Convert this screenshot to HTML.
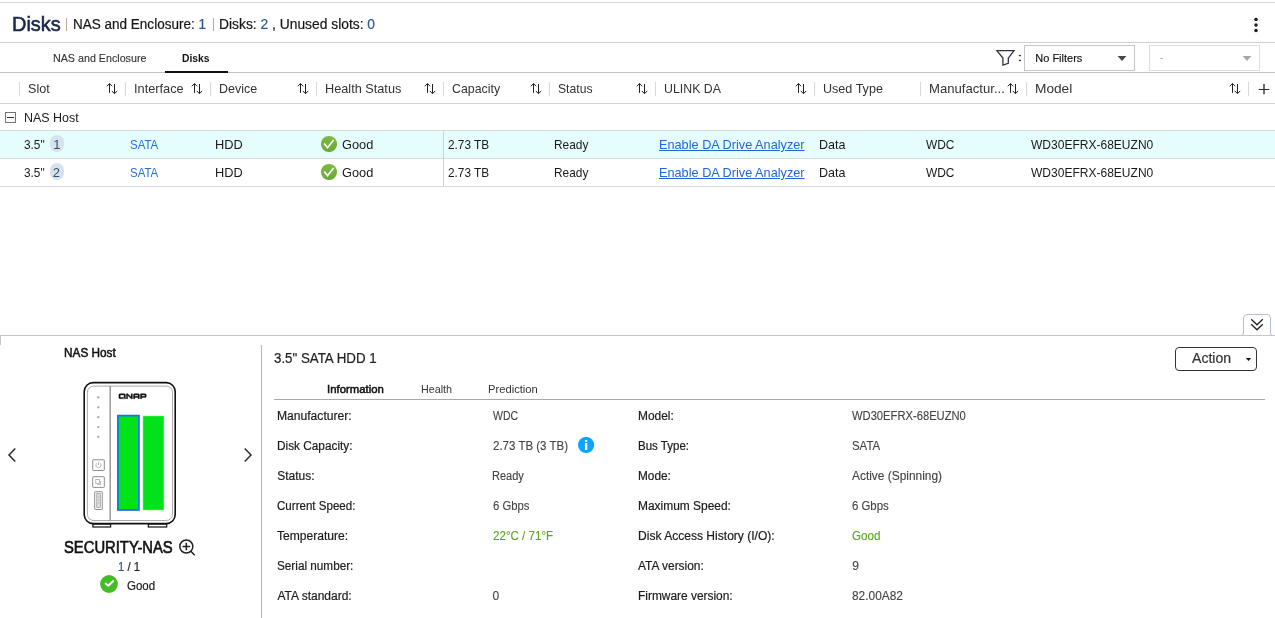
<!DOCTYPE html>
<html>
<head>
<meta charset="utf-8">
<title>Disks</title>
<style>
*{box-sizing:border-box;margin:0;padding:0}html,body{background:#fff}body{font-family:"Liberation Sans",sans-serif;position:relative}.t{position:absolute;white-space:nowrap}.a{position:absolute}html,body{width:1275px;height:618px;overflow:hidden}.t{transform-origin:0 50%}
</style>
</head>
<body>
<!-- horizontal rules -->
<div class="a" style="left:0;top:2px;width:1275px;height:1px;background:#d6d6d6"></div>
<div class="a" style="left:0;top:42px;width:1275px;height:1px;background:#d0d0d0"></div>
<div class="a" style="left:0;top:72px;width:1275px;height:1px;background:#c2c2c2"></div>
<div class="a" style="left:0;top:103px;width:1275px;height:1px;background:#d4d4d4"></div>
<div class="a" style="left:0;top:130px;width:1275px;height:1px;background:#dadada"></div>
<div class="a" style="left:0;top:131px;width:1275px;height:27px;background:#e6fdfd"></div>
<div class="a" style="left:0;top:158px;width:1275px;height:1px;background:#dadada"></div>
<div class="a" style="left:0;top:186px;width:1275px;height:1px;background:#dadada"></div>
<div class="a" style="left:443px;top:131px;width:1px;height:55px;background:#d2d2d2"></div>
<!-- title pipes -->
<div class="a" style="left:66px;top:18px;width:1px;height:13px;background:#b9ad94"></div>
<div class="a" style="left:213px;top:18px;width:1px;height:13px;background:#b9ad94"></div>
<!-- kebab -->
<svg class="a" style="left:1250px;top:14px" width="12" height="22" viewBox="0 0 12 22"><circle cx="6" cy="5.500" r="1.750" fill="#1a1a1a"/><circle cx="6" cy="11" r="1.750" fill="#1a1a1a"/><circle cx="6" cy="16.500" r="1.750" fill="#1a1a1a"/></svg>
<!-- active tab underline -->
<div class="a" style="left:165px;top:71px;width:63px;height:2px;background:#111"></div>
<!-- filter -->
<svg class="a" style="left:994px;top:48px" width="24" height="20" viewBox="0 0 24 20"><path d="M2.900 2.600 H20 L14.300 10.100 V15.300 L8.900 17 V10.100 Z" fill="none" stroke="#30313b" stroke-width="1.300" stroke-linejoin="miter"/></svg>
<svg class="a" style="left:1017px;top:53px" width="6" height="10" viewBox="0 0 6 10"><rect x="1.800" y="1.900" width="2.200" height="1.300" fill="#3c3c3c"/><rect x="1.800" y="6.800" width="2.200" height="1.300" fill="#3c3c3c"/></svg>
<div class="a" style="left:1024px;top:45px;width:111px;height:26px;border:1px solid #c6c6c6;background:#fff"></div>
<svg class="a" style="left:1117px;top:55px" width="10" height="7" viewBox="0 0 10 7"><path d="M0.600 0.900 H9.400 L5 5.900 Z" fill="#474747"/></svg>
<div class="a" style="left:1149px;top:45px;width:111px;height:26px;border:1px solid #dedede;background:#fff"></div>
<svg class="a" style="left:1242px;top:55px" width="10" height="7" viewBox="0 0 10 7"><path d="M0.600 0.900 H9.400 L5 5.900 Z" fill="#a8a8a8"/></svg>
<!-- header separators -->
<div class="a" style="left:19px;top:82px;width:1px;height:14px;background:#d9d9d9"></div>
<div class="a" style="left:125px;top:82px;width:1px;height:14px;background:#d9d9d9"></div>
<div class="a" style="left:210px;top:82px;width:1px;height:14px;background:#d9d9d9"></div>
<div class="a" style="left:316px;top:82px;width:1px;height:14px;background:#d9d9d9"></div>
<div class="a" style="left:443px;top:82px;width:1px;height:14px;background:#d9d9d9"></div>
<div class="a" style="left:549px;top:82px;width:1px;height:14px;background:#d9d9d9"></div>
<div class="a" style="left:655px;top:82px;width:1px;height:14px;background:#d9d9d9"></div>
<div class="a" style="left:814px;top:82px;width:1px;height:14px;background:#d9d9d9"></div>
<div class="a" style="left:920px;top:82px;width:1px;height:14px;background:#d9d9d9"></div>
<div class="a" style="left:1026px;top:82px;width:1px;height:14px;background:#d9d9d9"></div>
<div class="a" style="left:1248px;top:82px;width:1px;height:14px;background:#d9d9d9"></div>
<svg class="a" style="left:106px;top:83px" width="12" height="12" viewBox="0 0 12 12"><path d="M3.500 9.900 V0.600 M0.800 3.300 L3.500 0.500 L6.200 3.300 M8.500 1 V10.600 M5.800 7.900 L8.500 10.700 L11.200 7.900" fill="none" stroke="#222" stroke-width="1"/></svg><svg class="a" style="left:191px;top:83px" width="12" height="12" viewBox="0 0 12 12"><path d="M3.500 9.900 V0.600 M0.800 3.300 L3.500 0.500 L6.200 3.300 M8.500 1 V10.600 M5.800 7.900 L8.500 10.700 L11.200 7.900" fill="none" stroke="#222" stroke-width="1"/></svg><svg class="a" style="left:297px;top:83px" width="12" height="12" viewBox="0 0 12 12"><path d="M3.500 9.900 V0.600 M0.800 3.300 L3.500 0.500 L6.200 3.300 M8.500 1 V10.600 M5.800 7.900 L8.500 10.700 L11.200 7.900" fill="none" stroke="#222" stroke-width="1"/></svg><svg class="a" style="left:424px;top:83px" width="12" height="12" viewBox="0 0 12 12"><path d="M3.500 9.900 V0.600 M0.800 3.300 L3.500 0.500 L6.200 3.300 M8.500 1 V10.600 M5.800 7.900 L8.500 10.700 L11.200 7.900" fill="none" stroke="#222" stroke-width="1"/></svg><svg class="a" style="left:530px;top:83px" width="12" height="12" viewBox="0 0 12 12"><path d="M3.500 9.900 V0.600 M0.800 3.300 L3.500 0.500 L6.200 3.300 M8.500 1 V10.600 M5.800 7.900 L8.500 10.700 L11.200 7.900" fill="none" stroke="#222" stroke-width="1"/></svg><svg class="a" style="left:636px;top:83px" width="12" height="12" viewBox="0 0 12 12"><path d="M3.500 9.900 V0.600 M0.800 3.300 L3.500 0.500 L6.200 3.300 M8.500 1 V10.600 M5.800 7.900 L8.500 10.700 L11.200 7.900" fill="none" stroke="#222" stroke-width="1"/></svg><svg class="a" style="left:795px;top:83px" width="12" height="12" viewBox="0 0 12 12"><path d="M3.500 9.900 V0.600 M0.800 3.300 L3.500 0.500 L6.200 3.300 M8.500 1 V10.600 M5.800 7.900 L8.500 10.700 L11.200 7.900" fill="none" stroke="#222" stroke-width="1"/></svg><svg class="a" style="left:1007px;top:83px" width="12" height="12" viewBox="0 0 12 12"><path d="M3.500 9.900 V0.600 M0.800 3.300 L3.500 0.500 L6.200 3.300 M8.500 1 V10.600 M5.800 7.900 L8.500 10.700 L11.200 7.900" fill="none" stroke="#222" stroke-width="1"/></svg><svg class="a" style="left:1229px;top:83px" width="12" height="12" viewBox="0 0 12 12"><path d="M3.500 9.900 V0.600 M0.800 3.300 L3.500 0.500 L6.200 3.300 M8.500 1 V10.600 M5.800 7.900 L8.500 10.700 L11.200 7.900" fill="none" stroke="#222" stroke-width="1"/></svg>
<svg class="a" style="left:1258px;top:83px" width="12" height="12" viewBox="0 0 12 12"><path d="M6 0.900 V11.200" stroke="#222" stroke-width="1.300" fill="none"/><path d="M0.800 6.500 H11.300" stroke="#2a2a2a" stroke-width="1" fill="none"/></svg>
<!-- group row toggle -->
<div class="a" style="left:5px;top:112px;width:11px;height:11px;border:1px solid #747474;background:#fff"></div>
<div class="a" style="left:7px;top:117px;width:7px;height:1px;background:#333"></div>
<!-- badges -->
<div class="a" style="left:50px;top:135px;width:14px;height:17px;border-radius:7px;background:#d6e3ec"></div>
<div class="a" style="left:50px;top:163px;width:14px;height:17px;border-radius:7px;background:#d6e3ec"></div>
<!-- health icons -->
<div class="a" style="left:321.2px;top:136.2px;width:15.6px;height:15.6px;border-radius:50%;background:linear-gradient(#7dba45,#68a934)"></div>
<svg class="a" style="left:321px;top:136px" width="16" height="16" viewBox="0 0 16 16"><path d="M3.200 7.500 L6.500 11.700 L12.600 4" fill="none" stroke="#fff" stroke-width="1.700"/></svg>
<div class="a" style="left:321.2px;top:164.2px;width:15.6px;height:15.6px;border-radius:50%;background:linear-gradient(#7dba45,#68a934)"></div>
<svg class="a" style="left:321px;top:164px" width="16" height="16" viewBox="0 0 16 16"><path d="M3.200 7.500 L6.500 11.700 L12.600 4" fill="none" stroke="#fff" stroke-width="1.700"/></svg>
<!-- bottom panel frame -->
<div class="a" style="left:0;top:335px;width:1px;height:10px;background:#c6c6c6"></div>
<svg class="a" style="left:1239px;top:314px" width="36" height="22" viewBox="0 0 36 22"><path d="M2 21.500 Q4.500 21.500 4.500 19 V4 Q4.500 0.500 8 0.500 H28 Q31.500 0.500 31.500 4 V19 Q31.500 21.500 34 21.500" fill="#fff" stroke="#b7bdd6" stroke-width="1"/></svg>
<div class="a" style="left:0;top:335px;width:1275px;height:1px;background:#c6c6c6"></div>
<svg class="a" style="left:1249px;top:317px" width="16" height="16" viewBox="0 0 16 16"><path d="M2.200 2.300 L8 7.800 L13.800 2.300 M2.200 7.300 L8 12.800 L13.800 7.300" fill="none" stroke="#222" stroke-width="1.300"/></svg>
<div class="a" style="left:261px;top:345px;width:1px;height:273px;background:#aeb2cc"></div>
<!-- carousel arrows -->
<svg class="a" style="left:4px;top:445px" width="16" height="20" viewBox="0 0 16 20"><path d="M11.300 3.500 L5 10 L11.300 16.500" fill="none" stroke="#2a2a2a" stroke-width="1.500"/></svg>
<svg class="a" style="left:240px;top:445px" width="16" height="20" viewBox="0 0 16 20"><path d="M4.700 3.500 L11 10 L4.700 16.500" fill="none" stroke="#2a2a2a" stroke-width="1.500"/></svg>
<!-- NAS device -->
<svg class="a" style="left:80px;top:378px" width="100" height="152" viewBox="0 0 100 152">
  <rect x="12.900" y="146" width="17.700" height="3" fill="#fff" stroke="#111" stroke-width="1.200"/>
  <rect x="68.300" y="146" width="18.400" height="3" fill="#fff" stroke="#111" stroke-width="1.200"/>
  <rect x="4.200" y="4.600" width="91" height="141" rx="9" ry="9" fill="#fff" stroke="#111" stroke-width="1.600"/>
  <rect x="7.400" y="8.100" width="85.100" height="134.400" rx="6.200" ry="6.200" fill="none" stroke="#a0a0a0" stroke-width="0.900"/>
  <line x1="30.200" y1="8.100" x2="30.200" y2="142.500" stroke="#8c8c8c" stroke-width="1.300"/>
  <circle cx="18.300" cy="19.400" r="1.150" fill="#a4a4a4"/>
  <circle cx="18.300" cy="29.300" r="1.150" fill="#a4a4a4"/>
  <circle cx="18.300" cy="39.200" r="1.150" fill="#a4a4a4"/>
  <circle cx="18.300" cy="49.100" r="1.150" fill="#a4a4a4"/>
  <circle cx="18.300" cy="58.800" r="1.150" fill="#a4a4a4"/>
  <rect x="12.700" y="81.800" width="11.600" height="10.700" rx="0.600" fill="#fff" stroke="#8e8e8e" stroke-width="1"/>
  <path d="M16.700 85.200 A2.600 2.600 0 1 0 20.300 85.200 M18.500 84 V87" fill="none" stroke="#9a9a9a" stroke-width="0.700"/>
  <rect x="12.700" y="98.700" width="11.600" height="10.700" rx="0.600" fill="#fff" stroke="#8e8e8e" stroke-width="1"/>
  <rect x="15.800" y="101.500" width="3.800" height="3.800" fill="none" stroke="#9a9a9a" stroke-width="0.700"/>
  <path d="M20.600 103 V106.600 H17.200" fill="none" stroke="#9a9a9a" stroke-width="0.700"/>
  <rect x="14.700" y="113.700" width="7.600" height="17.800" rx="0.600" fill="#fff" stroke="#8e8e8e" stroke-width="1"/>
  <rect x="16.700" y="115.600" width="3.700" height="14" fill="#dcdcdc" stroke="#a0a0a0" stroke-width="0.700"/><path d="M17.300 119 H19.800 M17.300 122 H19.800 M17.300 125 H19.800" stroke="#a8a8a8" stroke-width="0.600"/>
  <g fill="#111" stroke="#111" stroke-width="0.350" transform="translate(38.800,15.700)">
    <path d="M1.300 0 H5.300 Q6.600 0 6.600 1.300 V3.700 Q6.600 5 5.300 5 H1.300 Q0 5 0 3.700 V1.300 Q0 0 1.300 0 Z M1.400 1.200 V3.800 H5.200 V1.200 Z M3.600 4 H6.800 V5 H3.600 Z" fill-rule="evenodd"/>
    <path d="M7.600 5 V0 H8.900 L12.300 3.400 V0 H13.600 V5 H12.300 L8.900 1.600 V5 Z"/>
    <path d="M14.600 5 V1.300 Q14.600 0 15.900 0 H19.300 Q20.600 0 20.600 1.300 V5 H19.200 V3.700 H16 V5 Z M16 2.600 H19.200 V1.200 H16 Z" fill-rule="evenodd"/>
    <path d="M21.600 5 V0 H26.200 Q27.500 0 27.500 1.300 V2.500 Q27.500 3.800 26.200 3.800 H23 V5 Z M23 2.600 H26.100 V1.200 H23 Z" fill-rule="evenodd"/>
  </g>
  <rect x="37.900" y="37.600" width="21" height="94.400" fill="#02e21a" stroke="#176bff" stroke-width="1.700"/>
  <rect x="63" y="38" width="20.900" height="94" fill="#02e21a" stroke="#7df08a" stroke-width="0.600"/>
</svg>
<!-- magnifier -->
<svg class="a" style="left:177px;top:537px" width="20" height="20" viewBox="0 0 20 20"><circle cx="9.300" cy="9.500" r="6.500" fill="none" stroke="#222" stroke-width="1.500"/><path d="M5.500 9.500 H13.100 M9.300 5.700 V13.300 M13.900 14.200 L17.700 18.200" fill="none" stroke="#222" stroke-width="1.500"/></svg>
<!-- good icon -->
<svg class="a" style="left:100px;top:575px" width="18" height="18" viewBox="0 0 18 18"><circle cx="9" cy="9" r="8.900" fill="#43bd25"/><path d="M5.700 8.500 L8.300 10.700 L13.200 6.100" fill="none" stroke="#fff" stroke-width="2.100" stroke-linecap="round" stroke-linejoin="round"/></svg>
<!-- action button -->
<div class="a" style="left:1175px;top:347px;width:82px;height:24px;border:1px solid #333;border-radius:4px;background:#fff"></div>
<svg class="a" style="left:1245px;top:357px" width="7" height="5" viewBox="0 0 7 5"><path d="M0.800 0.900 H6.200 L3.500 4 Z" fill="#111"/></svg>
<!-- detail tab rule -->
<div class="a" style="left:274px;top:399px;width:991px;height:1px;background:#a9a9a9"></div>
<!-- info icon -->
<svg class="a" style="left:578px;top:437px" width="17" height="17" viewBox="0 0 17 17"><circle cx="8.100" cy="8" r="8.100" fill="#0ba4fe"/><rect x="6.950" y="5.900" width="2.300" height="7" fill="#fff"/><rect x="6.950" y="3.100" width="2.300" height="1.700" fill="#fff"/></svg>

<!-- texts -->
<div class="a" style="left:0;top:0;width:1275px;height:618px;will-change:transform">
<div class="t" style="left:11.78px;top:11.21px;font-size:19.6px;line-height:26px;height:26px;color:#18264a;-webkit-text-stroke:0.55px currentColor;transform:scaleX(1.0165);">Disks</div>
<div class="t" style="left:72.97px;top:14.65px;font-size:14px;line-height:19px;height:19px;color:#161616;-webkit-text-stroke:0.2px currentColor;transform:scaleX(0.9653);">NAS and Enclosure: <span style="color:#2a5699">1</span></div>
<div class="t" style="left:218.95px;top:14.65px;font-size:14px;line-height:19px;height:19px;color:#161616;-webkit-text-stroke:0.2px currentColor;transform:scaleX(0.9877);">Disks: <span style="color:#2a5699">2</span> , Unused slots: <span style="color:#2a5699">0</span></div>
<div class="t" style="left:53.07px;top:50.69px;font-size:11px;line-height:15px;height:15px;color:#333;-webkit-text-stroke:0.12px currentColor;transform:scaleX(0.9730);">NAS and Enclosure</div>
<div class="t" style="left:182.19px;top:50.69px;font-size:11px;line-height:15px;height:15px;color:#111;font-weight:bold;transform:scaleX(0.9398);">Disks</div>
<div class="t" style="left:1035.27px;top:50.69px;font-size:11px;line-height:15px;height:15px;color:#111;-webkit-text-stroke:0.15px currentColor;">No Filters</div>
<div class="t" style="left:1159.82px;top:49.69px;font-size:11px;line-height:15px;height:15px;color:#aaa;">-</div>
<div class="t" style="left:27.85px;top:80.00px;font-size:13px;line-height:17px;height:17px;color:#333;transform:scaleX(0.9719);">Slot</div>
<div class="t" style="left:133.53px;top:80.00px;font-size:13px;line-height:17px;height:17px;color:#333;transform:scaleX(0.9830);">Interface</div>
<div class="t" style="left:219.29px;top:80.00px;font-size:13px;line-height:17px;height:17px;color:#333;transform:scaleX(0.9581);">Device</div>
<div class="t" style="left:324.57px;top:80.00px;font-size:13px;line-height:17px;height:17px;color:#333;transform:scaleX(0.9778);">Health Status</div>
<div class="t" style="left:452.10px;top:80.00px;font-size:13px;line-height:17px;height:17px;color:#333;transform:scaleX(0.9504);">Capacity</div>
<div class="t" style="left:557.96px;top:80.00px;font-size:13px;line-height:17px;height:17px;color:#333;transform:scaleX(0.9359);">Status</div>
<div class="t" style="left:663.50px;top:80.00px;font-size:13px;line-height:17px;height:17px;color:#333;transform:scaleX(0.9497);">ULINK DA</div>
<div class="t" style="left:822.98px;top:80.00px;font-size:13px;line-height:17px;height:17px;color:#333;transform:scaleX(0.9674);">Used Type</div>
<div class="t" style="left:929.13px;top:80.00px;font-size:13px;line-height:17px;height:17px;color:#333;transform:scaleX(1.0097);">Manufactur...</div>
<div class="t" style="left:1035.39px;top:80.00px;font-size:13px;line-height:17px;height:17px;color:#333;transform:scaleX(1.0527);">Model</div>
<div class="t" style="left:23.99px;top:109.00px;font-size:13px;line-height:17px;height:17px;color:#1a1a1a;transform:scaleX(0.9579);">NAS Host</div>
<div class="t" style="left:23.70px;top:136.00px;font-size:13px;line-height:17px;height:17px;color:#1a1a1a;transform:scaleX(0.9097);">3.5"</div>
<div class="t" style="left:53.33px;top:136.00px;font-size:13px;line-height:17px;height:17px;color:#34506e;">1</div>
<div class="t" style="left:130.08px;top:136.00px;font-size:13px;line-height:17px;height:17px;color:#2a6fd6;transform:scaleX(0.8813);">SATA</div>
<div class="t" style="left:215.26px;top:136.00px;font-size:13px;line-height:17px;height:17px;color:#1a1a1a;transform:scaleX(0.9844);">HDD</div>
<div class="t" style="left:342.20px;top:136.00px;font-size:13px;line-height:17px;height:17px;color:#1a1a1a;transform:scaleX(0.9832);">Good</div>
<div class="t" style="left:448.31px;top:136.00px;font-size:13px;line-height:17px;height:17px;color:#1a1a1a;transform:scaleX(0.9071);">2.73 TB</div>
<div class="t" style="left:553.64px;top:136.00px;font-size:13px;line-height:17px;height:17px;color:#1a1a1a;transform:scaleX(0.9140);">Ready</div>
<div class="t" style="left:659.37px;top:136.00px;font-size:13px;line-height:17px;height:17px;color:#2266d6;text-decoration:underline;text-underline-offset:1px;transform:scaleX(0.9781);">Enable DA Drive Analyzer</div>
<div class="t" style="left:819.28px;top:136.00px;font-size:13px;line-height:17px;height:17px;color:#1a1a1a;transform:scaleX(0.9642);">Data</div>
<div class="t" style="left:925.62px;top:136.00px;font-size:13px;line-height:17px;height:17px;color:#1a1a1a;transform:scaleX(0.9154);">WDC</div>
<div class="t" style="left:1031.22px;top:136.00px;font-size:13px;line-height:17px;height:17px;color:#1a1a1a;transform:scaleX(0.9247);">WD30EFRX-68EUZN0</div>
<div class="t" style="left:23.70px;top:164.00px;font-size:13px;line-height:17px;height:17px;color:#1a1a1a;transform:scaleX(0.9097);">3.5"</div>
<div class="t" style="left:52.80px;top:164.00px;font-size:13px;line-height:17px;height:17px;color:#34506e;">2</div>
<div class="t" style="left:130.08px;top:164.00px;font-size:13px;line-height:17px;height:17px;color:#2a6fd6;transform:scaleX(0.8813);">SATA</div>
<div class="t" style="left:215.26px;top:164.00px;font-size:13px;line-height:17px;height:17px;color:#1a1a1a;transform:scaleX(0.9844);">HDD</div>
<div class="t" style="left:342.20px;top:164.00px;font-size:13px;line-height:17px;height:17px;color:#1a1a1a;transform:scaleX(0.9832);">Good</div>
<div class="t" style="left:448.31px;top:164.00px;font-size:13px;line-height:17px;height:17px;color:#1a1a1a;transform:scaleX(0.9071);">2.73 TB</div>
<div class="t" style="left:553.64px;top:164.00px;font-size:13px;line-height:17px;height:17px;color:#1a1a1a;transform:scaleX(0.9140);">Ready</div>
<div class="t" style="left:659.37px;top:164.00px;font-size:13px;line-height:17px;height:17px;color:#2266d6;text-decoration:underline;text-underline-offset:1px;transform:scaleX(0.9781);">Enable DA Drive Analyzer</div>
<div class="t" style="left:819.28px;top:164.00px;font-size:13px;line-height:17px;height:17px;color:#1a1a1a;transform:scaleX(0.9642);">Data</div>
<div class="t" style="left:925.62px;top:164.00px;font-size:13px;line-height:17px;height:17px;color:#1a1a1a;transform:scaleX(0.9154);">WDC</div>
<div class="t" style="left:1031.22px;top:164.00px;font-size:13px;line-height:17px;height:17px;color:#1a1a1a;transform:scaleX(0.9247);">WD30EFRX-68EUZN0</div>
<div class="t" style="left:64.29px;top:344.84px;font-size:12px;line-height:16px;height:16px;color:#111;-webkit-text-stroke:0.5px currentColor;transform:scaleX(0.9825);">NAS Host</div>
<div class="t" style="left:63.85px;top:536.96px;font-size:16px;line-height:21px;height:21px;color:#111;-webkit-text-stroke:0.6px currentColor;transform:scaleX(0.9239);">SECURITY-NAS</div>
<div class="t" style="left:118.18px;top:558.84px;font-size:12px;line-height:16px;height:16px;color:#1a1a1a;-webkit-text-stroke:0.2px currentColor;transform:scaleX(0.9479);"><span style="color:#2a5699">1</span> / 1</div>
<div class="t" style="left:126.54px;top:577.84px;font-size:12px;line-height:16px;height:16px;color:#222;-webkit-text-stroke:0.2px currentColor;transform:scaleX(0.9600);">Good</div>
<div class="t" style="left:274.04px;top:348.65px;font-size:14px;line-height:19px;height:19px;color:#222;-webkit-text-stroke:0.2px currentColor;transform:scaleX(0.9508);">3.5" SATA HDD 1</div>
<div class="t" style="left:1191.52px;top:348.65px;font-size:14px;line-height:19px;height:19px;color:#333;-webkit-text-stroke:0.2px currentColor;transform:scaleX(1.0057);">Action</div>
<div class="t" style="left:327.18px;top:381.69px;font-size:11px;line-height:15px;height:15px;color:#111;-webkit-text-stroke:0.5px currentColor;transform:scaleX(1.0328);">Information</div>
<div class="t" style="left:421.06px;top:381.69px;font-size:11px;line-height:15px;height:15px;color:#333;transform:scaleX(0.9768);">Health</div>
<div class="t" style="left:488.35px;top:381.69px;font-size:11px;line-height:15px;height:15px;color:#333;transform:scaleX(1.0179);">Prediction</div>
<div class="t" style="left:277.25px;top:407.84px;font-size:12px;line-height:16px;height:16px;color:#1c1c1c;-webkit-text-stroke:0.2px currentColor;transform:scaleX(1.0078);">Manufacturer:</div>
<div class="t" style="left:492.63px;top:407.84px;font-size:12px;line-height:16px;height:16px;color:#444;-webkit-text-stroke:0.12px currentColor;transform:scaleX(0.8755);">WDC</div>
<div class="t" style="left:637.56px;top:407.84px;font-size:12px;line-height:16px;height:16px;color:#1c1c1c;-webkit-text-stroke:0.2px currentColor;transform:scaleX(0.9936);">Model:</div>
<div class="t" style="left:852.33px;top:407.84px;font-size:12px;line-height:16px;height:16px;color:#444;-webkit-text-stroke:0.12px currentColor;transform:scaleX(0.9328);">WD30EFRX-68EUZN0</div>
<div class="t" style="left:277.26px;top:437.84px;font-size:12px;line-height:16px;height:16px;color:#1c1c1c;-webkit-text-stroke:0.2px currentColor;transform:scaleX(0.9848);">Disk Capacity:</div>
<div class="t" style="left:492.53px;top:437.84px;font-size:12px;line-height:16px;height:16px;color:#444;-webkit-text-stroke:0.12px currentColor;transform:scaleX(0.9589);">2.73 TB (3 TB)</div>
<div class="t" style="left:637.57px;top:437.84px;font-size:12px;line-height:16px;height:16px;color:#1c1c1c;-webkit-text-stroke:0.2px currentColor;transform:scaleX(0.9595);">Bus Type:</div>
<div class="t" style="left:852.18px;top:437.84px;font-size:12px;line-height:16px;height:16px;color:#444;-webkit-text-stroke:0.12px currentColor;transform:scaleX(0.9525);">SATA</div>
<div class="t" style="left:277.28px;top:467.84px;font-size:12px;line-height:16px;height:16px;color:#1c1c1c;-webkit-text-stroke:0.2px currentColor;">Status:</div>
<div class="t" style="left:492.47px;top:467.84px;font-size:12px;line-height:16px;height:16px;color:#444;-webkit-text-stroke:0.12px currentColor;transform:scaleX(0.9178);">Ready</div>
<div class="t" style="left:637.56px;top:467.84px;font-size:12px;line-height:16px;height:16px;color:#1c1c1c;-webkit-text-stroke:0.2px currentColor;transform:scaleX(0.9851);">Mode:</div>
<div class="t" style="left:852.31px;top:467.84px;font-size:12px;line-height:16px;height:16px;color:#444;-webkit-text-stroke:0.12px currentColor;transform:scaleX(0.9926);">Active (Spinning)</div>
<div class="t" style="left:277.34px;top:497.84px;font-size:12px;line-height:16px;height:16px;color:#1c1c1c;-webkit-text-stroke:0.2px currentColor;transform:scaleX(0.9633);">Current Speed:</div>
<div class="t" style="left:492.53px;top:497.84px;font-size:12px;line-height:16px;height:16px;color:#444;-webkit-text-stroke:0.12px currentColor;transform:scaleX(0.9396);">6 Gbps</div>
<div class="t" style="left:637.56px;top:497.84px;font-size:12px;line-height:16px;height:16px;color:#1c1c1c;-webkit-text-stroke:0.2px currentColor;transform:scaleX(0.9948);">Maximum Speed:</div>
<div class="t" style="left:852.23px;top:497.84px;font-size:12px;line-height:16px;height:16px;color:#444;-webkit-text-stroke:0.12px currentColor;transform:scaleX(0.9499);">6 Gbps</div>
<div class="t" style="left:277.42px;top:527.84px;font-size:12px;line-height:16px;height:16px;color:#1c1c1c;-webkit-text-stroke:0.2px currentColor;transform:scaleX(1.0070);">Temperature:</div>
<div class="t" style="left:492.53px;top:527.84px;font-size:12px;line-height:16px;height:16px;color:#5aa51e;-webkit-text-stroke:0.12px currentColor;transform:scaleX(0.9654);">22°C / 71°F</div>
<div class="t" style="left:637.55px;top:527.84px;font-size:12px;line-height:16px;height:16px;color:#1c1c1c;-webkit-text-stroke:0.2px currentColor;transform:scaleX(1.0050);">Disk Access History (I/O):</div>
<div class="t" style="left:852.22px;top:527.84px;font-size:12px;line-height:16px;height:16px;color:#5aa51e;-webkit-text-stroke:0.12px currentColor;transform:scaleX(0.9677);">Good</div>
<div class="t" style="left:277.29px;top:557.84px;font-size:12px;line-height:16px;height:16px;color:#1c1c1c;-webkit-text-stroke:0.2px currentColor;transform:scaleX(0.9787);">Serial number:</div>
<div class="t" style="left:637.72px;top:557.84px;font-size:12px;line-height:16px;height:16px;color:#1c1c1c;-webkit-text-stroke:0.2px currentColor;transform:scaleX(0.9931);">ATA version:</div>
<div class="t" style="left:852.22px;top:557.84px;font-size:12px;line-height:16px;height:16px;color:#444;-webkit-text-stroke:0.12px currentColor;">9</div>
<div class="t" style="left:277.42px;top:587.84px;font-size:12px;line-height:16px;height:16px;color:#1c1c1c;-webkit-text-stroke:0.2px currentColor;">ATA standard:</div>
<div class="t" style="left:492.55px;top:587.84px;font-size:12px;line-height:16px;height:16px;color:#444;-webkit-text-stroke:0.12px currentColor;">0</div>
<div class="t" style="left:637.56px;top:587.84px;font-size:12px;line-height:16px;height:16px;color:#1c1c1c;-webkit-text-stroke:0.2px currentColor;transform:scaleX(0.9928);">Firmware version:</div>
<div class="t" style="left:852.24px;top:587.84px;font-size:12px;line-height:16px;height:16px;color:#444;-webkit-text-stroke:0.12px currentColor;transform:scaleX(0.9907);">82.00A82</div>
</div>
</body>
</html>
